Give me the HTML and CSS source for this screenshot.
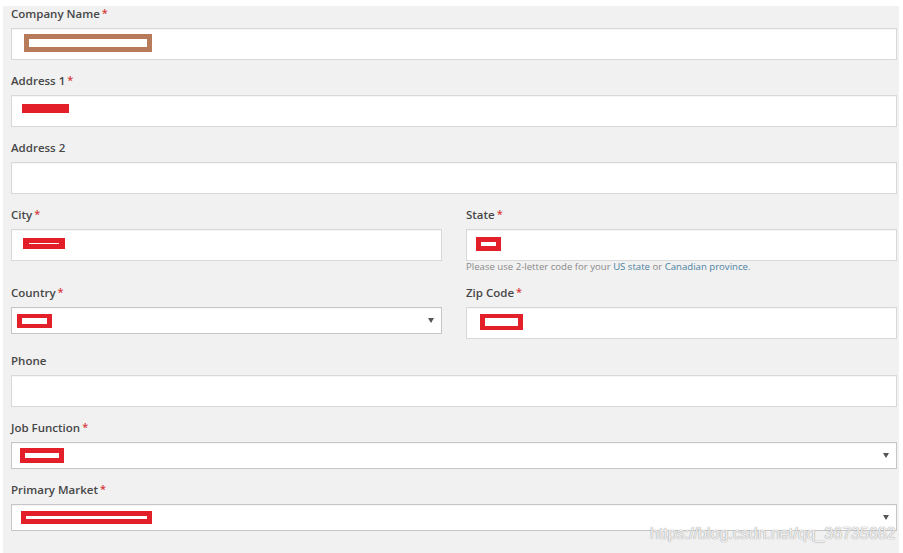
FILE: index.html
```html
<!DOCTYPE html>
<html lang="en">
<head>
<meta charset="utf-8">
<title>Form</title>
<link rel="stylesheet" href="styles.css">
</head>
<body>
<div class="panel">
  <div class="field">
    <div class="lbl">Company Name<span class="req">*</span></div>
    <div class="box"><span class="mark m-company"></span></div>
  </div>
  <div class="field">
    <div class="lbl">Address 1<span class="req">*</span></div>
    <div class="box"><span class="mark m-addr"></span></div>
  </div>
  <div class="field">
    <div class="lbl">Address 2</div>
    <div class="box"></div>
  </div>
  <div class="row row-city">
    <div class="col">
      <div class="lbl">City<span class="req">*</span></div>
      <div class="box"><span class="mark m-city"></span></div>
    </div>
    <div class="col">
      <div class="lbl">State<span class="req">*</span></div>
      <div class="box"><span class="mark m-state"></span></div>
      <div class="help">Please use 2-letter code for your <a class="lnk">US state</a> or <a class="lnk">Canadian province</a>.</div>
    </div>
  </div>
  <div class="row row-country">
    <div class="col">
      <div class="lbl">Country<span class="req">*</span></div>
      <div class="box sel"><span class="mark m-country"></span><span class="arrow"></span></div>
    </div>
    <div class="col">
      <div class="lbl">Zip Code<span class="req">*</span></div>
      <div class="box"><span class="mark m-zip"></span></div>
    </div>
  </div>
  <div class="field">
    <div class="lbl">Phone</div>
    <div class="box"></div>
  </div>
  <div class="field">
    <div class="lbl">Job Function<span class="req">*</span></div>
    <div class="box sel"><span class="mark m-job"></span><span class="arrow"></span></div>
  </div>
  <div class="field">
    <div class="lbl">Primary Market<span class="req">*</span></div>
    <div class="box sel"><span class="mark m-market"></span><span class="arrow"></span></div>
  </div>
</div>
<div class="watermark">https://blog.csdn.net/qq_36735682</div>
</body>
</html>
```

FILE: styles.css
```css
html, body {
  margin: 0;
  padding: 0;
  background: #ffffff;
}

body {
  font-family: "Open Sans", "Noto Sans", sans-serif;
  width: 903px;
  height: 553px;
  overflow: hidden;
  position: relative;
}

.panel {
  margin: 6px 4px 0 3px;
  padding: 0 2px 0 8px;
  background: #f1f1f1;
  min-height: 547px;
  box-sizing: border-box;
  display: flex;
  flex-direction: column;
}

.field {
  display: flex;
  flex-direction: column;
  margin-bottom: 13px;
}

.row {
  display: grid;
  grid-template-columns: 431px 431px;
  column-gap: 24px;
  align-items: start;
}

.row-city {
  margin-bottom: 12px;
}

.row-country {
  margin-bottom: 14px;
}

.col {
  display: flex;
  flex-direction: column;
}

.lbl {
  font-size: 11.5px;
  font-weight: 600;
  line-height: 16px;
  color: #474747;
  margin-bottom: 6px;
  white-space: nowrap;
}

.req {
  color: #d63a3a;
  margin-left: 2px;
  font-size: 11px;
  position: relative;
  top: -1px;
}

.box {
  height: 32px;
  box-sizing: border-box;
  background: #ffffff;
  border: 1px solid #d8d8d8;
  box-shadow: inset 0 1px 1px rgba(0, 0, 0, 0.04);
  display: flex;
  align-items: center;
  position: relative;
}

.box.sel {
  height: 27px;
  border-color: #c6c6c6;
}

.arrow {
  margin-left: auto;
  margin-right: 7px;
  width: 0;
  height: 0;
  border-left: 3px solid transparent;
  border-right: 3px solid transparent;
  border-top: 5px solid #555555;
}

.help {
  font-size: 9.6px;
  line-height: 12px;
  color: #8a8a8a;
  white-space: nowrap;
}

.lnk {
  color: #4c82a3;
  text-decoration: none;
}

.mark {
  display: block;
  box-sizing: border-box;
  background: #ffffff;
  border-style: solid;
  border-color: #e3202a;
}

.m-company {
  margin-left: 12px;
  margin-top: -2px;
  width: 128px;
  height: 18px;
  border-width: 5px;
  border-color: #b77b5c;
}

.m-addr {
  margin-left: 10px;
  margin-top: -5px;
  width: 47px;
  height: 9px;
  background: #e3202a;
  border-width: 0;
}

.m-city {
  margin-left: 11px;
  margin-top: -3px;
  width: 42px;
  height: 11px;
  border-width: 5px 6px;
}

.m-state {
  margin-left: 9px;
  margin-top: -2px;
  width: 25px;
  height: 14px;
  border-width: 5px;
}

.m-country {
  margin-left: 5px;
  margin-top: 0;
  width: 35px;
  height: 14px;
  border-width: 4px 5px;
}

.m-zip {
  margin-left: 13px;
  margin-top: -3px;
  width: 43px;
  height: 16px;
  border-width: 4px 5px;
}

.m-job {
  margin-left: 8px;
  margin-top: 0;
  width: 44px;
  height: 15px;
  border-width: 5px;
}

.m-market {
  margin-left: 9px;
  margin-top: 0;
  width: 131px;
  height: 13px;
  border-width: 5px;
}

.watermark {
  position: absolute;
  left: 650px;
  top: 524px;
  font-family: "Liberation Sans", Arial, sans-serif;
  font-size: 16px;
  line-height: 20px;
  color: rgba(255, 255, 255, 0.85);
  text-shadow: 0 0 1px #9a9a9a, 0 0 1px #b0b0b0;
  white-space: nowrap;
}
```
